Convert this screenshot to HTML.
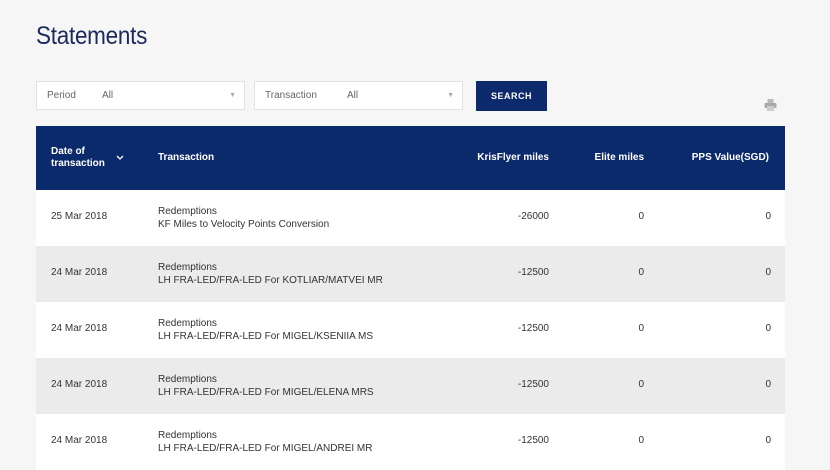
<!DOCTYPE html>
<html><head><style>
body{margin:0;width:830px;height:468px;overflow:hidden;background:#f6f6f6;font-family:"Liberation Sans",sans-serif;color:#333;}
h1{position:absolute;left:36px;top:22px;margin:0;font-weight:normal;font-size:25px;color:#1a2a5a;letter-spacing:-0.3px;transform:scaleX(0.9);transform-origin:left;}
.sel{position:absolute;top:81px;height:29px;background:#fff;border:1px solid #e2e2e2;box-sizing:border-box;font-size:10px;color:#666;line-height:27px;}
.sel span{position:absolute}
.btn{position:absolute;left:476px;top:81px;width:71px;height:30px;background:#0d2a6c;color:#fff;font-size:9px;font-weight:bold;text-align:center;line-height:30px;letter-spacing:0.5px}
.tbl{position:absolute;left:36px;top:126px;width:749px}
.hd{height:64px;background:#0b2a6c;color:#fff;font-size:10px;font-weight:bold;position:relative}
.row{height:56px;position:relative;font-size:10px;color:#333}
.row:nth-child(odd){background:#fff}.row:nth-child(even){background:#ebebeb}
.c{position:absolute}
</style></head><body>
<h1>Statements</h1>
<div class="sel" style="left:36px;width:209px"><span style="left:10px">Period</span><span style="left:65px">All</span><span style="right:8px;font-size:7px;color:#aaa">▼</span></div>
<div class="sel" style="left:254px;width:209px"><span style="left:10px">Transaction</span><span style="left:92px">All</span><span style="right:8px;font-size:7px;color:#aaa">▼</span></div>
<div class="btn">SEARCH</div>
<svg style="position:absolute;left:764px;top:99px" width="13" height="12" viewBox="0 0 13 12"><rect x="3.5" y="0" width="6" height="4" fill="#bbb"/><rect x="0.5" y="4" width="12" height="5" rx="1" fill="#aaa"/><rect x="3" y="7" width="7" height="5" fill="#ccc"/></svg>
<div class="tbl">
<div class="hd"><div class="c" style="left:15px;top:20px;line-height:12px">Date of<br>transaction</div>
<svg class="c" style="left:80px;top:29px" width="8" height="5" viewBox="0 0 8 5"><path d="M1 1L4 4L7 1" stroke="#fff" stroke-width="1.3" fill="none"/></svg>
<div class="c" style="left:122px;top:26px">Transaction</div><div class="c" style="right:236px;top:26px">KrisFlyer miles</div><div class="c" style="right:141px;top:26px">Elite miles</div><div class="c" style="right:16px;top:26px">PPS Value(SGD)</div></div>
<div class="rows">
<div class="row"><div class="c" style="left:15px;top:21px">25 Mar 2018</div><div class="c" style="left:122px;top:15px;line-height:13px">Redemptions<br>KF Miles to Velocity Points Conversion</div><div class="c" style="right:236px;top:21px">-26000</div><div class="c" style="right:141px;top:21px">0</div><div class="c" style="right:14px;top:21px">0</div></div>
<div class="row"><div class="c" style="left:15px;top:21px">24 Mar 2018</div><div class="c" style="left:122px;top:15px;line-height:13px">Redemptions<br>LH FRA-LED/FRA-LED For KOTLIAR/MATVEI MR</div><div class="c" style="right:236px;top:21px">-12500</div><div class="c" style="right:141px;top:21px">0</div><div class="c" style="right:14px;top:21px">0</div></div>
<div class="row"><div class="c" style="left:15px;top:21px">24 Mar 2018</div><div class="c" style="left:122px;top:15px;line-height:13px">Redemptions<br>LH FRA-LED/FRA-LED For MIGEL/KSENIIA MS</div><div class="c" style="right:236px;top:21px">-12500</div><div class="c" style="right:141px;top:21px">0</div><div class="c" style="right:14px;top:21px">0</div></div>
<div class="row"><div class="c" style="left:15px;top:21px">24 Mar 2018</div><div class="c" style="left:122px;top:15px;line-height:13px">Redemptions<br>LH FRA-LED/FRA-LED For MIGEL/ELENA MRS</div><div class="c" style="right:236px;top:21px">-12500</div><div class="c" style="right:141px;top:21px">0</div><div class="c" style="right:14px;top:21px">0</div></div>
<div class="row"><div class="c" style="left:15px;top:21px">24 Mar 2018</div><div class="c" style="left:122px;top:15px;line-height:13px">Redemptions<br>LH FRA-LED/FRA-LED For MIGEL/ANDREI MR</div><div class="c" style="right:236px;top:21px">-12500</div><div class="c" style="right:141px;top:21px">0</div><div class="c" style="right:14px;top:21px">0</div></div>
</div></div>
</body></html>
